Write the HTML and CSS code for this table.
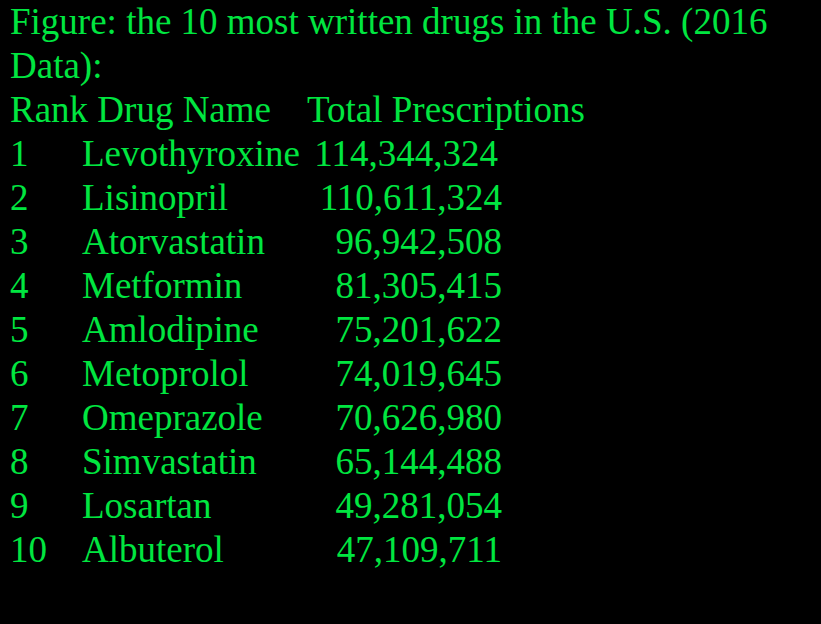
FILE: index.html
```html
<!DOCTYPE html>
<html>
<head>
    <title>Top Drugs 2016</title>
    <link rel="stylesheet" href="styles.css">
</head>
<body>
    <div class="figure">
        <p class="caption">Figure: the 10 most written drugs in the U.S. (2016 Data):</p>

        <!-- header line -->
        <div class="head">
            <span>Rank Drug Name</span>
            <span>Total Prescriptions</span>
        </div>

        <!-- drug rows -->
        <div class="rows">
            <div class="row wide"><span class="rank">1</span><span class="name">Levothyroxine</span><span class="num">114,344,324</span></div>
            <div class="row"><span class="rank">2</span><span class="name">Lisinopril</span><span class="num">110,611,324</span></div>
            <div class="row"><span class="rank">3</span><span class="name">Atorvastatin</span><span class="num">96,942,508</span></div>
            <div class="row"><span class="rank">4</span><span class="name">Metformin</span><span class="num">81,305,415</span></div>
            <div class="row"><span class="rank">5</span><span class="name">Amlodipine</span><span class="num">75,201,622</span></div>
            <div class="row"><span class="rank">6</span><span class="name">Metoprolol</span><span class="num">74,019,645</span></div>
            <div class="row"><span class="rank">7</span><span class="name">Omeprazole</span><span class="num">70,626,980</span></div>
            <div class="row"><span class="rank">8</span><span class="name">Simvastatin</span><span class="num">65,144,488</span></div>
            <div class="row"><span class="rank">9</span><span class="name">Losartan</span><span class="num">49,281,054</span></div>
            <div class="row"><span class="rank">10</span><span class="name">Albuterol</span><span class="num">47,109,711</span></div>
        </div>
    </div>
</body>
</html>
```

FILE: styles.css
```css
html, body {
    background-color: #000;
}

body {
    margin: 0;
    padding: 0;
    font-family: "Liberation Serif", "Times New Roman", serif;
    font-size: 37px;
    line-height: 44px;
    color: #00e640;
}

.figure {
    padding: 0 10px;
}

.caption {
    margin: 0;
}

.head {
    display: flex;
    gap: 36px;
}

/* rows: rank | name | number (right aligned) */
.rows {
    width: 492px;
}

.row {
    display: grid;
    grid-template-columns: 72px 1fr auto;
}

.num {
    text-align: right;
}

/* first row: number sits a little left of the others */
.row.wide .num {
    padding-right: 4px;
}
```
